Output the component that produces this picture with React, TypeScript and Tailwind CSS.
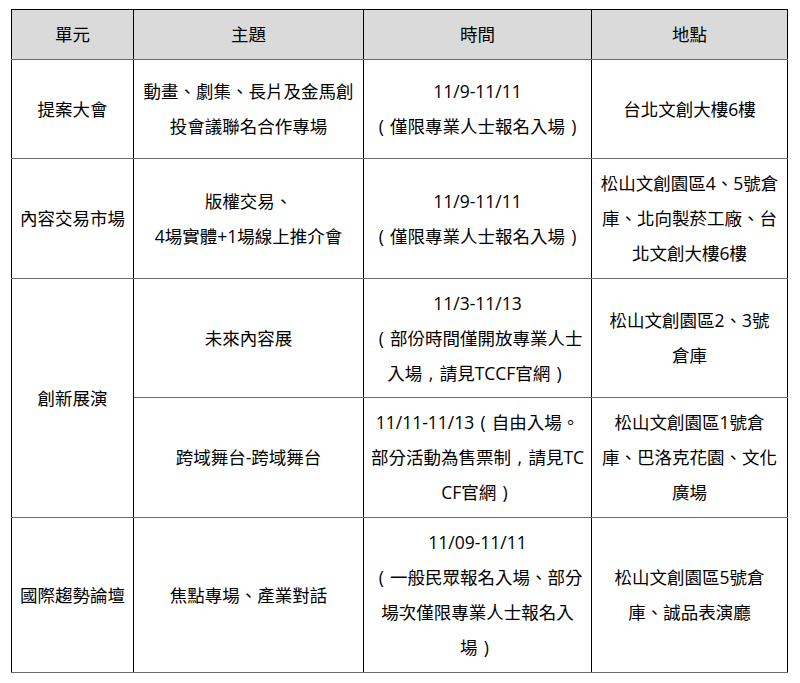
import React from "react";

const font = {
  fontFamily: '"Open Sans", "Noto Sans CJK TC", sans-serif',
};

function renderLine(l: string) {
  const parts = l.split(/([（），])/);
  return parts.map((p, i) => {
    if (p === "（")
      return (
        <span key={i} className="inline-block w-[1em] text-center">
          (
        </span>
      );
    if (p === "）")
      return (
        <span key={i} className="inline-block w-[1em] text-center">
          )
        </span>
      );
    if (p === "，")
      return (
        <span key={i} className="inline-block w-[1em] text-center">
          ,
        </span>
      );
    return <React.Fragment key={i}>{p}</React.Fragment>;
  });
}

function Lines({ lines }: { lines: string[] }) {
  return (
    <>
      {lines.map((l, i) => (
        <div key={i} className="whitespace-nowrap">
          {renderLine(l)}
        </div>
      ))}
    </>
  );
}

const td =
  "border-l border-r border-b border-l-black border-r-black border-b-[#6b6b6b] text-center align-middle px-1 leading-[35px]";

export default function App() {
  return (
    <div className="bg-white w-[800px] h-[683px] pl-[11px] pt-[9px]" style={font}>
      <table className="table-fixed border-collapse w-[776px] text-[17.5px] text-black">
        <colgroup>
          <col className="w-[122px]" />
          <col className="w-[230px]" />
          <col className="w-[228px]" />
          <col className="w-[196px]" />
        </colgroup>
        <thead>
          <tr className="h-[50px] bg-[#dadada]">
            <th className={`${td} font-normal border-t border-t-black`}>單元</th>
            <th className={`${td} font-normal border-t border-t-black`}>主題</th>
            <th className={`${td} font-normal border-t border-t-black`}>時間</th>
            <th className={`${td} font-normal border-t border-t-black`}>地點</th>
          </tr>
        </thead>
        <tbody>
          <tr className="h-[99px]">
            <td className={td}>提案大會</td>
            <td className={td}>
              <Lines lines={["動畫、劇集、長片及金馬創", "投會議聯名合作專場"]} />
            </td>
            <td className={td}>
              <Lines lines={["11/9-11/11", "（僅限專業人士報名入場）"]} />
            </td>
            <td className={td}>台北文創大樓6樓</td>
          </tr>
          <tr className="h-[120px]">
            <td className={td}>內容交易市場</td>
            <td className={td}>
              <Lines lines={["版權交易、", "4場實體+1場線上推介會"]} />
            </td>
            <td className={td}>
              <Lines lines={["11/9-11/11", "（僅限專業人士報名入場）"]} />
            </td>
            <td className={td}>
              <Lines lines={["松山文創園區4、5號倉", "庫、北向製菸工廠、台", "北文創大樓6樓"]} />
            </td>
          </tr>
          <tr className="h-[119px]">
            <td className={td} rowSpan={2}>
              創新展演
            </td>
            <td className={td}>未來內容展</td>
            <td className={td}>
              <Lines lines={["11/3-11/13", "（部份時間僅開放專業人士", "入場，請見TCCF官網）"]} />
            </td>
            <td className={td}>
              <Lines lines={["松山文創園區2、3號", "倉庫"]} />
            </td>
          </tr>
          <tr className="h-[120px]">
            <td className={td}>跨域舞台-跨域舞台</td>
            <td className={td}>
              <Lines lines={["11/11-11/13（自由入場。", "部分活動為售票制，請見TC", "CF官網）"]} />
            </td>
            <td className={td}>
              <Lines lines={["松山文創園區1號倉", "庫、巴洛克花園、文化", "廣場"]} />
            </td>
          </tr>
          <tr className="h-[155px]">
            <td className={td}>國際趨勢論壇</td>
            <td className={td}>焦點專場、產業對話</td>
            <td className={td}>
              <Lines
                lines={["11/09-11/11", "（一般民眾報名入場、部分", "場次僅限專業人士報名入", "場）"]}
              />
            </td>
            <td className={td}>
              <Lines lines={["松山文創園區5號倉", "庫、誠品表演廳"]} />
            </td>
          </tr>
        </tbody>
      </table>
    </div>
  );
}
